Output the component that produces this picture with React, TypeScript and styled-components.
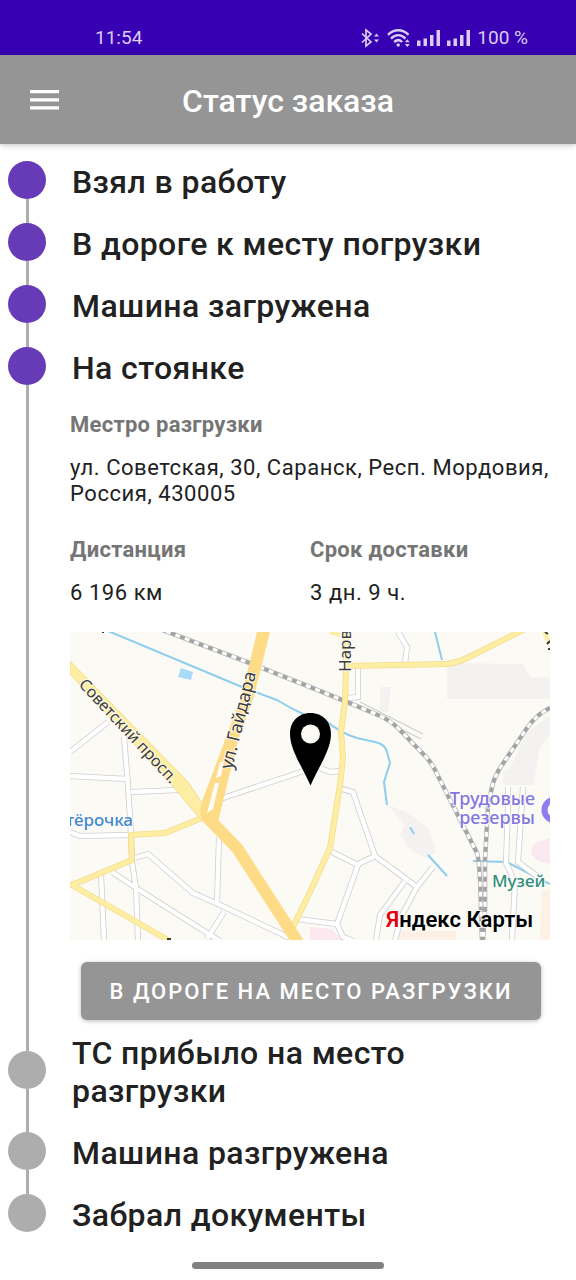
import React from "react";
import styled, { createGlobalStyle } from "styled-components";

const GlobalStyle = createGlobalStyle`
  *, *::before, *::after { box-sizing: border-box; }
  body {
    margin: 0;
    background: #ffffff;
    color: #212121;
    font-family: Roboto, "Noto Sans", sans-serif;
  }
`;

const Screen = styled.div`
  display: flex;
  flex-direction: column;
  min-height: 100vh;
`;

const StatusBar = styled.div`
  display: flex;
  align-items: flex-end;
  justify-content: space-between;
  height: 55px;
  padding: 0 48px 5px 95px;
  background: #3700b3;
  color: #dccbf5;
  font-size: 19px;
  line-height: 24px;
`;

const StatusIcons = styled.div`
  display: flex;
  align-items: center;
  gap: 7px;

  svg { display: block; }
`;

const AppBar = styled.header`
  display: grid;
  grid-template-columns: 60px 1fr 60px;
  align-items: center;
  height: 89px;
  padding: 0 14px;
  background: #959595;
  color: #ffffff;
  box-shadow: 0 1px 6px rgba(0, 0, 0, 0.25);
`;

const MenuButton = styled.button`
  display: flex;
  align-items: center;
  justify-content: center;
  width: 60px;
  height: 60px;
  padding: 0;
  border: 0;
  background: transparent;
  color: inherit;
  cursor: pointer;
`;

const PageTitle = styled.h1`
  margin: 0;
  padding-top: 3px;
  font-size: 32px;
  font-weight: 500;
  line-height: 38px;
  text-align: center;
`;

const Timeline = styled.ol`
  flex: 1;
  margin: 0;
  padding: 5px 26px 0 8px;
  list-style: none;
`;

const StepRow = styled.div`
  display: grid;
  grid-template-columns: 38px 1fr;
  column-gap: 24px;
`;

const Rail = styled.div`
  display: flex;
  flex-direction: column;
  align-items: center;
`;

const Line = styled.span<{ $hidden?: boolean }>`
  flex: 1;
  width: 3px;
  background: ${(p) => (p.$hidden ? "transparent" : "#adadad")};
`;

const Dot = styled.span<{ $done: boolean }>`
  width: 38px;
  height: 38px;
  border-radius: 50%;
  background: ${(p) => (p.$done ? "#673ab7" : "#adadad")};
`;

const StepTitle = styled.h2`
  margin: 0;
  padding: 14px 0 10px 2px;
  font-size: 32px;
  font-weight: 500;
  letter-spacing: 0.0125em;
  line-height: 38px;
`;

const Panel = styled.div`
  display: flex;
  flex-direction: column;
  padding-top: 15px;
`;

const Facts = styled.dl`
  display: grid;
  grid-template-columns: 1fr 1fr;
  row-gap: 30px;
  margin: 0 0 26px;
  font-size: 22px;
  line-height: 26px;
`;

const Fact = styled.div<{ $wide?: boolean }>`
  grid-column: ${(p) => (p.$wide ? "1 / -1" : "auto")};
`;

const FactLabel = styled.dt`
  margin-bottom: 17px;
  color: #757575;
  font-weight: 700;
  letter-spacing: 0.0125em;
`;

const FactValue = styled.dd`
  margin: 0;
  letter-spacing: 0.025em;
`;

const MapView = styled.svg`
  display: block;
  width: 100%;
  height: auto;
`;

const MapLabel = styled.text<{ $size?: number; $weight?: number }>`
  font-family: "Noto Sans", sans-serif;
  font-size: ${(p) => p.$size ?? 17}px;
  font-weight: ${(p) => p.$weight ?? 400};
  paint-order: stroke;
  stroke: rgba(255, 255, 255, 0.8);
  stroke-width: 2px;
`;

const MapBrand = styled(MapLabel)`
  font-family: Roboto, sans-serif;
`;

const ActionButton = styled.button`
  height: 58px;
  margin: 22px 9px 0 11px;
  padding: 2px 0 0;
  border: 0;
  border-radius: 6px;
  background: #959595;
  color: #ffffff;
  box-shadow: 0 1px 4px rgba(0, 0, 0, 0.28);
  font-family: inherit;
  font-size: 22px;
  font-weight: 500;
  letter-spacing: 2px;
  line-height: 26px;
  text-transform: uppercase;
  cursor: pointer;
`;

const HomeBar = styled.div`
  display: flex;
  justify-content: center;
  padding: 18px 0 11px;
`;

const HomeHandle = styled.span`
  width: 192px;
  height: 7px;
  border-radius: 4px;
  background: #808080;
`;

const BluetoothIcon = () => (
  <svg width="20" height="20" viewBox="0 0 20 20" fill="none" stroke="currentColor" strokeWidth="1.7" aria-hidden="true">
    <path d="M2 5.500 11 14l-5 4V2l5 4-9 8.500" />
    <path d="m14 8.500 2.500-3 2.500 3zM14 11.500l2.500 3 2.500-3z" fill="currentColor" stroke="none" />
  </svg>
);

const WifiIcon = () => (
  <svg width="23" height="20" viewBox="0 0 23 20" fill="none" stroke="currentColor" strokeWidth="2.400" aria-hidden="true">
    <path d="M1 6.800c6-6 14.500-6 20.500 0M4 10.600c4.500-4.400 10-4.400 14.500 0M7.200 14c2.600-2.400 5.500-2.400 8 0" />
    <circle cx="11.200" cy="17" r="1.700" fill="currentColor" stroke="none" />
    <path d="m17.800 14.200 2.500-3 2.500 3zM17.800 16l2.500 3 2.500-3z" fill="currentColor" stroke="none" />
  </svg>
);

const SignalIcon = () => (
  <svg width="23" height="20" viewBox="0 0 23 20" fill="currentColor" aria-hidden="true">
    <path d="M0 12.500h3.500V18H0zM6.500 10.500H10V18H6.500zM13 7h3.500v11H13zM19.500 2H23v16h-3.500z" />
  </svg>
);

const minorRoads = [
  "M0 120 38 90",
  "M54 105 58 153 61 203 62 230 66 256 68 308",
  "M0 144 57 147",
  "M61 160 108 158",
  "M0 200 10 204 60 203",
  "M65 226 78 222 123 261 148 272 222 307",
  "M42 240 66 256 150 309",
  "M31 242 34 308",
  "M149 205 147 271",
  "M154 280 137 307",
  "M150 167 237 138",
  "M227 287 267 292 273 305 284 309",
  "M267 292 288 233 262 220",
  "M288 232 305 224 347 255 363 235",
  "M305 224 283 160 272 157",
  "M335 249 310 283 306 308",
  "M347 255 332 283 325 308",
  "M250 136 260 140 270 139",
  "M288 36V65L278 66",
  "M328 0 337 15 335 32",
  "M438 155V173L436 231 445 250 442 308",
  "M453 155 448 230 472 248",
];

const rails = [
  "M82 -6 177 30 240 55 277 70 308 83Q320 88 330 98L357 126Q362 132 365 138L407 221Q410 230 411 278L412 309",
  "M480 76Q467 82 457 96L430 136Q424 146 422 155L418 175 415 228 415 278 413 309",
];

const yellowRoads = [
  "M132 186 95 201 61 203 62 228 2 253 98 308",
  "M276 0V36L275 70 271 100 273 126 270 153 260 216 240 260 222 297",
  "M276 34 377 32Q390 30 401 24L453 -2",
];

const river = [
  "M38 -1 172 55 207 68Q220 76 233 82L255 88Q270 101 287 106L305 110Q315 112 317 120L320 131 314 150 317 173",
  "M340 195 344 202",
  "M358 223 377 244",
  "M403 229 437 230 462 243 480 252",
  "M365 0 372 28",
];

const MapPreview = () => (
  <MapView viewBox="0 0 480 308" role="img" aria-label="Яндекс Карты">
    <rect width="480" height="308" fill="#fbfaf5" />
    <g fill="#f3f2f0">
      <path d="M377 31 453 32 460 45 480 46V67H377zM310 55H321L318 80H310zM480 83 457 100 440 136 433 140V153H463L470 116 480 103z" />
      <path d="M318 173 337 180 358 196 366 220 356 226 342 219 330 203 335 193z" />
    </g>
    <path d="M480 206 463 212 461 222 468 229 480 232z" fill="#fbe9f1" />
    <path d="M240 295 262 297 272 308H240z" fill="#fbe9ef" />
    <path d="M472 258H480V308H470zM330 299H386V308H324z" fill="#fdf0e4" />
    <path d="M111 36 123 40 121 48 108 45z" fill="#a9dbf7" />
    <g fill="none" stroke="#8ecdec" strokeWidth="2">
      {river.map((d) => <path key={d} d={d} />)}
    </g>
    <g fill="none" stroke="#cfcfd1" strokeWidth="6">
      {minorRoads.map((d) => <path key={d} d={d} />)}
    </g>
    <g fill="none" stroke="#ffffff" strokeWidth="4.400">
      {minorRoads.map((d) => <path key={d} d={d} />)}
    </g>
    <path d="M290 70 353 102M325 94 351 107" fill="none" stroke="#c4c4c6" strokeWidth="1" />
    <g fill="none" stroke="#b8b8b8" strokeWidth="4.600">
      {rails.map((d) => <path key={d} d={d} />)}
    </g>
    <g fill="none" stroke="#ffffff" strokeWidth="3">
      {rails.map((d) => <path key={d} d={d} />)}
    </g>
    <g fill="none" stroke="#a3a3a3" strokeWidth="3.600" strokeDasharray="5 5">
      {rails.map((d) => <path key={d} d={d} />)}
    </g>
    <g fill="none" stroke="#f3dc8c" strokeWidth="6" strokeLinejoin="round">
      {yellowRoads.map((d) => <path key={d} d={d} />)}
    </g>
    <g fill="none" stroke="#feeea4" strokeWidth="4.500" strokeLinejoin="round">
      {yellowRoads.map((d) => <path key={d} d={d} />)}
    </g>
    <path d="M474 0 480 12M260 0 270 3" stroke="#feeea4" strokeWidth="4" />
    <path d="M0 29 118 150 139 182 131 188 102 153 0 42z" fill="#feeea4" stroke="#f3dc8c" strokeWidth="1" />
    <path d="M187 0H200L184 64 168 108 148 190 134 188 130 184 131 172 155 108 171 66z" fill="#fedc87" />
    <path d="M135 183 167 216Q180 236 191 253L229 312" fill="none" stroke="#fedc87" strokeWidth="12" />
    <path d="M145 151 149 151 143 177 137 181zM150 130 154 129 151 144 146 146z" fill="#fffdf6" />

    <MapLabel fill="#3c3c40" $size={16} transform="translate(8 53) rotate(47)">Советский просп.</MapLabel>
    <MapLabel fill="#3c3c40" $size={18} transform="translate(162 138) rotate(-76)">ул. Гайдара</MapLabel>
    <MapLabel fill="#3c3c40" transform="translate(281 40) rotate(-90)">Нарв</MapLabel>
    <MapLabel fill="#4488cc" $weight={500} x="63" y="194" textAnchor="end">тёрочка</MapLabel>
    <MapLabel fill="#8277dc" $weight={500} $size={18} x="465" y="173" textAnchor="end">Трудовые</MapLabel>
    <MapLabel fill="#8277dc" $weight={500} $size={18} x="465" y="192" textAnchor="end">резервы</MapLabel>
    <MapLabel fill="#2f907a" $weight={500} x="422" y="255">Музей</MapLabel>
    <circle cx="485" cy="178" r="10.500" fill="#ffffff" stroke="#8f7eee" strokeWidth="6" />
    <path d="M32 0H34M97 307H101M475 0 478 2M477 12 480 9M478 17H480" stroke="#3a3a3a" strokeWidth="2" />

    <MapBrand $size={22} $weight={600} x="316" y="295" fill="#000000">
      <tspan fill="#e3000f">Я</tspan>ндекс Карты
    </MapBrand>

    <path
      d="M240.500 81C228 81 220 90 220 102C220 118 233 136 240.500 153.500C248 136 261 118 261 102C261 90 253 81 240.500 81z"
      fill="#000000"
    />
    <circle cx="240.500" cy="102" r="9.500" fill="#fbfaf5" />
  </MapView>
);

const DeliveryPanel = () => (
  <Panel>
    <Facts>
      <Fact $wide>
        <FactLabel>Местро разгрузки</FactLabel>
        <FactValue>ул. Советская, 30, Саранск, Респ. Мордовия, Россия, 430005</FactValue>
      </Fact>
      <Fact>
        <FactLabel>Дистанция</FactLabel>
        <FactValue>6 196 км</FactValue>
      </Fact>
      <Fact>
        <FactLabel>Срок доставки</FactLabel>
        <FactValue>3 дн. 9 ч.</FactValue>
      </Fact>
    </Facts>
    <MapPreview />
    <ActionButton type="button">В дороге на место разгрузки</ActionButton>
  </Panel>
);

const steps = [
  { title: "Взял в работу", done: true },
  { title: "В дороге к месту погрузки", done: true },
  { title: "Машина загружена", done: true },
  { title: "На стоянке", done: true, current: true },
  { title: "ТС прибыло на место разгрузки", done: false },
  { title: "Машина разгружена", done: false },
  { title: "Забрал документы", done: false },
];

export default function App() {
  return (
    <Screen>
      <GlobalStyle />
      <StatusBar>
        <span>11:54</span>
        <StatusIcons>
          <BluetoothIcon />
          <WifiIcon />
          <SignalIcon />
          <SignalIcon />
          <span>100 %</span>
        </StatusIcons>
      </StatusBar>
      <AppBar>
        <MenuButton type="button" aria-label="Меню">
          <svg width="29" height="20" viewBox="0 0 29 20" fill="currentColor" aria-hidden="true">
            <path d="M0 0h29v3.200H0zM0 8.200h29v3.200H0zM0 16.200h29v3.200H0z" />
          </svg>
        </MenuButton>
        <PageTitle>Статус заказа</PageTitle>
      </AppBar>
      <Timeline>
        {steps.map((step, i) => (
          <li key={step.title}>
            <StepRow>
              <Rail>
                <Line $hidden={i === 0} />
                <Dot $done={step.done} />
                <Line $hidden={i === steps.length - 1} />
              </Rail>
              <StepTitle>{step.title}</StepTitle>
            </StepRow>
            {step.current && (
              <StepRow>
                <Rail>
                  <Line />
                </Rail>
                <DeliveryPanel />
              </StepRow>
            )}
          </li>
        ))}
      </Timeline>
      <HomeBar>
        <HomeHandle />
      </HomeBar>
    </Screen>
  );
}
